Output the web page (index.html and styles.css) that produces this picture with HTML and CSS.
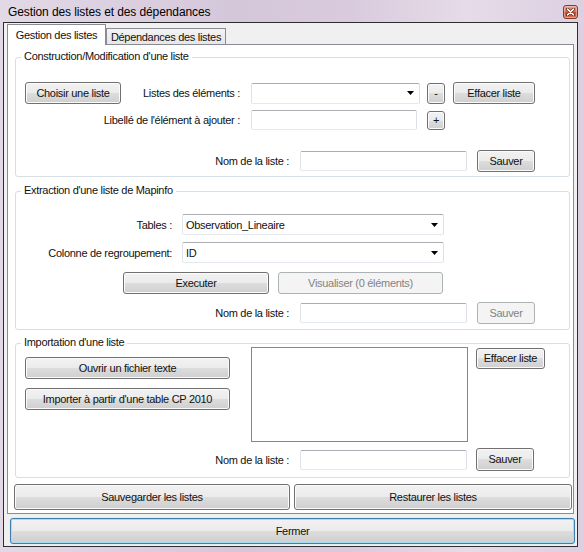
FILE: index.html
```html
<!DOCTYPE html>
<html lang="fr">
<head>
<meta charset="utf-8">
<title>Gestion des listes et des dépendances</title>
<link rel="stylesheet" href="styles.css">
</head>
<body>
<div class="window">
  <div class="titlebar">
    <span class="title">Gestion des listes et des dépendances</span>
    <span class="close">
      <svg width="9" height="8" viewBox="0 0 9 8"><path d="M1.5 1.2L7.5 6.8M7.5 1.2L1.5 6.8" stroke="#5a1e12" stroke-width="3" stroke-linecap="round"/><path d="M1.5 1.2L7.5 6.8M7.5 1.2L1.5 6.8" stroke="#fff" stroke-width="1.6" stroke-linecap="round"/></svg>
    </span>
  </div>
  <div class="client">
    <div class="tabs">
      <div class="tab active">Gestion des listes</div>
      <div class="tab">Dépendances des listes</div>
    </div>
    <div class="panel">
      <div class="group g1">
        <span class="legend">Construction/Modification d'une liste</span>
        <div class="row r1-1">
          <button class="btn w-choisir">Choisir une liste</button>
          <span class="lbl w-lbl1">Listes des éléments :</span>
          <div class="combo w-combo1"><span class="combo-text"></span><svg class="arrow" width="7" height="4" viewBox="0 0 7 4"><path d="M0 0H7L3.5 4Z" fill="#000"/></svg></div>
          <button class="btn sq sq-minus">-</button>
          <button class="btn w-effacer">Effacer liste</button>
        </div>
        <div class="row r1-2">
          <span class="lbl w-lbl1b">Libellé de l'élément à ajouter :</span>
          <div class="tb w-tb2"></div>
          <button class="btn sq sq-plus">+</button>
        </div>
        <div class="row r-name r1-3">
          <span class="lbl w-lblname">Nom de la liste :</span>
          <div class="tb w-tbname"></div>
          <button class="btn w-sauver">Sauver</button>
        </div>
      </div>

      <div class="group g2">
        <span class="legend">Extraction d'une liste de Mapinfo</span>
        <div class="row r2-1">
          <span class="lbl w-lbl2">Tables :</span>
          <div class="combo w-combo2"><span class="combo-text">Observation_Lineaire</span><svg class="arrow" width="7" height="4" viewBox="0 0 7 4"><path d="M0 0H7L3.5 4Z" fill="#000"/></svg></div>
        </div>
        <div class="row r2-2">
          <span class="lbl w-lbl2">Colonne de regroupement:</span>
          <div class="combo w-combo2"><span class="combo-text">ID</span><svg class="arrow" width="7" height="4" viewBox="0 0 7 4"><path d="M0 0H7L3.5 4Z" fill="#000"/></svg></div>
        </div>
        <div class="row r2-3">
          <button class="btn w-exec">Executer</button>
          <button class="btn disabled w-visu">Visualiser (0 éléments)</button>
        </div>
        <div class="row r-name r2-4">
          <span class="lbl w-lblname">Nom de la liste :</span>
          <div class="tb w-tbname"></div>
          <button class="btn disabled w-sauver">Sauver</button>
        </div>
      </div>

      <div class="group g3">
        <span class="legend">Importation d'une liste</span>
        <div class="import-top">
          <div class="import-buttons">
            <button class="btn w-import">Ouvrir un fichier texte</button>
            <button class="btn w-import">Importer à partir d'une table CP 2010</button>
          </div>
          <div class="listbox"></div>
          <button class="btn w-effacer2">Effacer liste</button>
        </div>
        <div class="row r-name r3-name">
          <span class="lbl w-lblname">Nom de la liste :</span>
          <div class="tb w-tbname"></div>
          <button class="btn w-sauver">Sauver</button>
        </div>
      </div>

      <div class="bottom-row">
        <button class="btn big">Sauvegarder les listes</button>
        <button class="btn big">Restaurer les listes</button>
      </div>
    </div>
    <button class="btn fermer">Fermer</button>
  </div>
</div>
</body>
</html>
```
FILE: styles.css
```css
* { box-sizing: border-box; }

body {
  margin: 0;
  background: #dcd0e0;
  font-family: "Liberation Sans", Arial, sans-serif;
  font-size: 11px;
  letter-spacing: -0.3px;
  color: #111;
}

.window {
  width: 584px;
  height: 552px;
  display: flex;
  flex-direction: column;
  background: linear-gradient(90deg, #e2d9e6 0%, #d5c7da 40%, #d9cbdd 60%, #e6dbe8 80%, #dcd0e1 100%);
}

.titlebar {
  height: 22px;
  flex: none;
  display: flex;
  align-items: center;
  justify-content: space-between;
  padding: 0 6px 0 8px;
}

.title {
  font-size: 12px;
  letter-spacing: -0.1px;
  padding-top: 1px;
  color: #000;
}

.close {
  width: 15px;
  height: 14px;
  margin-top: 1px;
  border: 1px solid #86392a;
  border-radius: 3px;
  background: linear-gradient(#eca792 0%, #d9775c 45%, #c44b2d 55%, #d57a5e 100%);
  box-shadow: inset 0 0 0 1px rgba(255, 220, 210, 0.45);
  display: flex;
  align-items: center;
  justify-content: center;
}

.close svg { display: block; }

.client {
  margin: 0 6px 5px 3px;
  height: 525px;
  flex: none;
  border: 1px solid #2e2e2e;
  background: #f0f0f0;
  padding: 0 3px 2px 3px;
  display: flex;
  flex-direction: column;
}

.tabs {
  height: 21px;
  flex: none;
  display: flex;
  align-items: flex-end;
}

.tab {
  height: 16px;
  width: 120px;
  border: 1px solid #898c95;
  border-bottom: none;
  background: linear-gradient(#f3f3f3, #e6e6e6);
  display: flex;
  align-items: center;
  justify-content: center;
  padding-top: 1px;
  white-space: nowrap;
}

.tab.active {
  width: 99px;
  height: 21px;
  margin-bottom: -1px;
  background: #fff;
  position: relative;
  z-index: 1;
  padding-top: 0;
}

.panel {
  height: 470px;
  flex: none;
  background: #fff;
  border: 1px solid #898c95;
  padding: 12px 3px 3px 7px;
  display: flex;
  flex-direction: column;
}

.group {
  position: relative;
  flex: none;
  border: 1px solid #d5dfe5;
  border-radius: 3px;
}

.g1 { height: 120px; padding-top: 24px; }
.g2 { height: 139px; margin-top: 14px; padding-top: 22px; }
.g3 { height: 135px; margin-top: 13px; padding-top: 3px; }

.legend {
  position: absolute;
  top: -8px;
  left: 5px;
  padding: 0 3px;
  background: #fff;
  line-height: 13px;
  white-space: nowrap;
}

.row {
  display: flex;
  align-items: center;
}

.lbl {
  flex: none;
  text-align: right;
  white-space: nowrap;
}

/* buttons */
.btn {
  flex: none;
  font: inherit;
  letter-spacing: inherit;
  color: #111;
  padding: 0;
  margin: 0;
  border: 1px solid #707070;
  border-radius: 3px;
  background: linear-gradient(#f2f2f2 0%, #ebebeb 50%, #dddddd 50%, #cfcfcf 100%);
  box-shadow: inset 0 0 0 1px #fbfbfb;
  white-space: nowrap;
  line-height: 13px;
}

.btn.disabled {
  border-color: #adb2b5;
  background: #f4f4f4;
  box-shadow: none;
  color: #838383;
}

.tb, .combo {
  flex: none;
  background: #fff;
  border: 1px solid;
  border-color: #abadb3 #dbdfe6 #e3e9ef #e2e3ea;
  border-radius: 2px;
}

.combo {
  display: flex;
  align-items: center;
  justify-content: space-between;
  padding: 0 5px 0 2px;
}

.combo-text { white-space: nowrap; }
.arrow { display: block; flex: none; }

/* group 1 */
.r1-1 { height: 22px; padding-left: 9px; }
.w-choisir { width: 96px; height: 22px; }
.w-lbl1 { width: 119px; margin-right: 11px; }
.w-combo1 { width: 169px; height: 21px; }
.sq { width: 18px; height: 21px; }
.sq-minus { margin-left: 7px; }
.w-effacer { width: 82px; height: 22px; margin-left: 8px; }

.r1-2 { height: 20px; margin-top: 6px; padding-left: 65px; }
.w-lbl1b { width: 159px; margin-right: 11px; }
.w-tb2 { width: 166px; height: 20px; }
.sq-plus { margin-left: 10px; height: 19px; }

.r-name { height: 22px; }
.w-lblname { width: 273px; margin-right: 11px; }
.w-tbname { width: 167px; height: 20px; }
.w-sauver { width: 58px; height: 22px; margin-left: 10px; }
.r1-3 { margin-top: 20px; }

/* group 2 */
.r2-1 { height: 21px; }
.r2-2 { height: 21px; margin-top: 7px; }
.w-lbl2 { width: 156px; margin-right: 10px; }
.w-combo2 { width: 262px; height: 21px; padding-left: 3px; }
.r2-3 { height: 22px; margin-top: 9px; padding-left: 107px; }
.w-exec { width: 146px; height: 22px; }
.w-visu { width: 165px; height: 22px; margin-left: 9px; }
.r2-4 { margin-top: 8px; }

/* group 3 */
.import-top {
  display: flex;
  align-items: flex-start;
  height: 95px;
}

.import-buttons {
  flex: none;
  display: flex;
  flex-direction: column;
  gap: 9px;
  margin: 10px 0 0 9px;
}

.w-import { width: 205px; height: 22px; }

.listbox {
  flex: none;
  width: 217px;
  height: 95px;
  margin-left: 21px;
  background: #fff;
  border: 1px solid #828790;
}

.w-effacer2 { width: 69px; height: 21px; margin: 1px 0 0 8px; }

.r3-name { height: 23px; margin-top: 6px; }
.r3-name .w-sauver { height: 23px; margin-left: 9px; }

/* bottom */
.bottom-row {
  flex: none;
  display: grid;
  grid-template-columns: 276px 278px;
  gap: 4px;
  height: 26px;
  margin: 6px -2px 0 -1px;
}

.big { height: 26px; }

.fermer {
  height: 26px;
  margin: 4px -1px 0 3px;
  border-color: #3c7fb1;
  box-shadow: inset 0 0 0 1px #a8dcf5, 0 0 1px #6fc6ee;
  background: linear-gradient(#f2f2f2 0%, #ebebeb 50%, #dddddd 50%, #cfcfcf 100%);
}
```
